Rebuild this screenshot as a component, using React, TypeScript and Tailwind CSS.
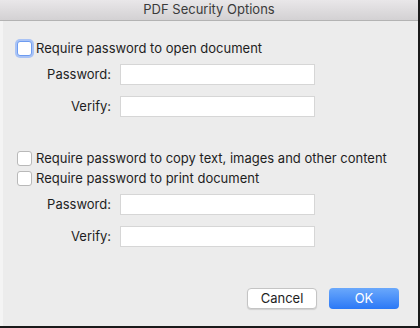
import React from 'react';

const font = { fontFamily: 'Inter, "Liberation Sans", sans-serif' };

function Checkbox({ focused }: { focused?: boolean }) {
    return (
        <span
            className={
                focused
                    ? 'box-border w-[15px] h-[15px] rounded-[3px] bg-white border border-[#6e9cf0] shadow-[0_0_0_2px_#a9c3f5] shrink-0'
                    : 'box-border w-[15px] h-[15px] rounded-[3px] bg-white border border-[#b9b9b9] shrink-0'
            }
        />
    );
}

function CheckRow({ label, focused, className }: { label: string; focused?: boolean; className?: string }) {
    return (
        <div className={'flex items-center gap-[4px] h-[19px] ' + (className ?? '')}>
            <Checkbox focused={focused} />
            <span className="text-[13px]">{label}</span>
        </div>
    );
}

function Field({ label, className }: { label: string; className?: string }) {
    return (
        <div className={'flex items-center ' + (className ?? '')}>
            <label className="w-[94px] text-right text-[13px] text-[#1e1e1e]">{label}</label>
            <div className="ml-[9px] w-[195px] h-[21px] bg-white border border-[#d6d6d6]" />
        </div>
    );
}

export default function App() {
    return (
        <div
            className="w-[420px] h-[328px] bg-[#ececec] flex flex-col border-r-2 border-b-2 border-[#1a1a1a] box-border text-[#1e1e1e]"
            style={font}
        >
            <div className="h-[21px] shrink-0 bg-gradient-to-b from-[#e9e7e9] to-[#d3d1d3] border-b border-[#b3b3b3] flex items-center justify-center text-[13px] text-[#3a3a3a]">
                PDF Security Options
            </div>

            <div className="flex-1 flex flex-col pl-[14px] border-l-[3px] border-[#f4f4f4]">
                <CheckRow label="Require password to open document" focused className="mt-[18px]" />
                <Field label="Password:" className="mt-[6px]" />
                <Field label="Verify:" className="mt-[11px]" />

                <CheckRow label="Require password to copy text, images and other content" className="mt-[32px]" />
                <CheckRow label="Require password to print document" className="mt-[1px]" />
                <Field label="Password:" className="mt-[6px]" />
                <Field label="Verify:" className="mt-[11px]" />

                <div className="flex justify-end gap-[12px] mt-auto mb-[17px] pr-[19px]">
                    <button className="w-[70px] h-[21px] rounded-[4px] bg-white border border-[#c4c4c4] shadow-[0_1px_1px_rgba(0,0,0,0.12)] text-[13px] text-[#1e1e1e]">
                        Cancel
                    </button>
                    <button className="w-[70px] h-[21px] rounded-[4px] bg-gradient-to-b from-[#6aa8fb] to-[#2a78f6] text-[13px] text-white">
                        OK
                    </button>
                </div>
            </div>
        </div>
    );
}
